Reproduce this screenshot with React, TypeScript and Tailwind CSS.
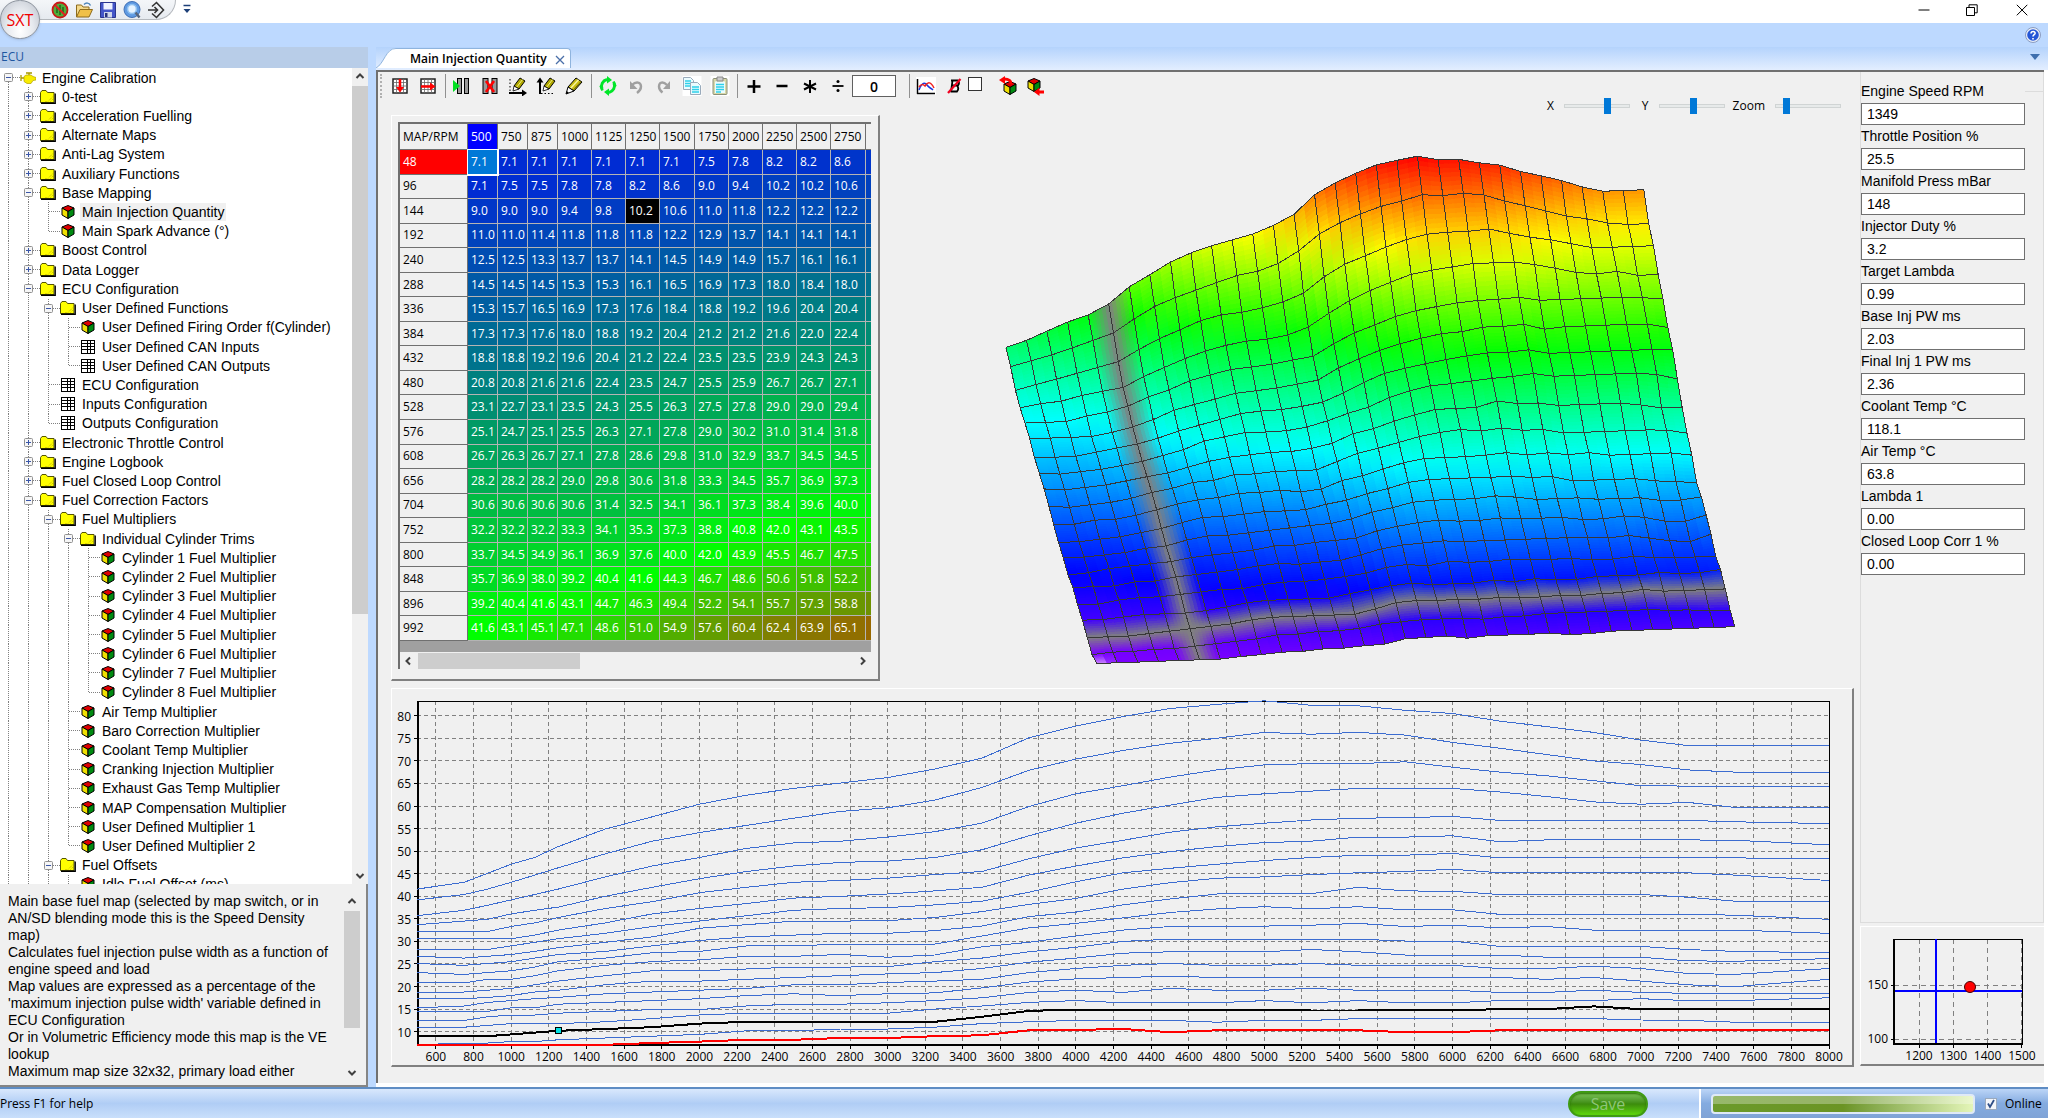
import type { ReactNode } from "react";
import clsx from "clsx";

const RPM = [
  500, 750, 875, 1000, 1125, 1250, 1500, 1750, 2000, 2250, 2500, 2750, 3000, 3250, 3500, 3750, 4000, 4250, 4500, 4750,
  5000, 5250, 5500, 5750, 6000, 6250, 6500, 6750, 7000, 7250, 7500, 8000,
];

const LOAD = [48, 96, 144, 192, 240, 288, 336, 384, 432, 480, 528, 576, 608, 656, 704, 752, 800, 848, 896, 992];

const MAP = [
  [7.1, 7.1, 7.1, 7.1, 7.1, 7.1, 7.1, 7.5, 7.8, 8.2, 8.2, 8.6, 8.6, 9.0, 9.2, 10.3, 10.4, 10.6, 9.9, 10.3, 10.3, 10.3, 10.3, 9.9, 9.9, 10.3, 10.3, 10.3, 10.3, 10.3, 10.3, 10.3],
  [7.1, 7.5, 7.5, 7.8, 7.8, 8.2, 8.6, 9.0, 9.4, 10.2, 10.2, 10.6, 10.6, 11.0, 11.8, 12.2, 12.5, 12.5, 12.5, 12.1, 12.5, 12.5, 12.9, 12.9, 12.9, 12.9, 12.9, 12.9, 12.6, 12.5, 12.1, 12.1],
  [9.0, 9.0, 9.0, 9.4, 9.8, 10.2, 10.6, 11.0, 11.8, 12.2, 12.2, 12.2, 12.2, 12.2, 13.3, 14.6, 14.9, 14.7, 14.9, 14.7, 14.9, 14.7, 14.7, 14.9, 14.7, 15.0, 15.0, 15.6, 15.0, 15.0, 15.0, 15.0],
  [11.0, 11.0, 11.4, 11.8, 11.8, 11.8, 12.2, 12.9, 13.7, 14.1, 14.1, 14.1, 14.1, 15.0, 15.7, 16.5, 16.9, 16.4, 16.4, 16.4, 16.9, 16.4, 16.9, 16.4, 16.4, 16.9, 16.9, 16.9, 17.3, 16.9, 16.9, 17.5],
  [12.5, 12.5, 13.3, 13.7, 13.7, 14.1, 14.5, 14.9, 14.9, 15.7, 16.1, 16.1, 16.4, 16.9, 17.5, 18.7, 19.2, 18.7, 19.6, 19.2, 19.2, 19.6, 19.2, 19.2, 19.2, 18.7, 18.7, 19.2, 18.7, 18.5, 18.5, 18.5],
  [14.5, 14.5, 14.5, 15.3, 15.3, 16.1, 16.5, 16.9, 17.3, 18.0, 18.4, 18.0, 18.4, 18.6, 19.7, 21.0, 21.7, 22.0, 22.3, 22.0, 22.0, 22.0, 22.0, 22.0, 22.0, 22.0, 21.6, 22.0, 21.2, 20.4, 20.0, 21.6],
  [15.3, 15.7, 16.5, 16.9, 17.3, 17.6, 18.4, 18.8, 19.2, 19.6, 20.4, 20.4, 20.9, 21.2, 21.6, 23.1, 24.0, 24.7, 25.1, 24.7, 24.7, 25.1, 24.7, 24.7, 24.7, 24.0, 24.0, 24.5, 24.0, 22.9, 22.7, 24.0],
  [17.3, 17.3, 17.6, 18.0, 18.8, 19.2, 20.4, 21.2, 21.2, 21.6, 22.0, 22.4, 22.8, 23.1, 24.0, 25.4, 26.3, 27.4, 27.7, 27.7, 27.7, 28.2, 27.7, 27.0, 27.0, 27.0, 26.5, 26.5, 26.5, 25.7, 25.6, 26.2],
  [18.8, 18.8, 19.2, 19.6, 20.4, 21.2, 22.4, 23.5, 23.5, 23.9, 24.3, 24.3, 24.4, 25.5, 26.3, 27.7, 28.7, 30.0, 30.5, 30.5, 30.5, 30.5, 30.5, 30.1, 30.1, 28.9, 28.9, 28.9, 28.9, 28.2, 27.8, 27.5],
  [20.8, 20.8, 21.6, 21.6, 22.4, 23.5, 24.7, 25.5, 25.9, 26.7, 26.7, 27.1, 26.5, 27.0, 28.8, 29.8, 31.2, 32.5, 33.3, 33.4, 33.4, 33.6, 34.0, 33.3, 33.6, 33.0, 33.3, 32.5, 32.5, 32.5, 32.5, 31.8],
  [23.1, 22.7, 23.1, 23.5, 24.3, 25.5, 26.3, 27.5, 27.8, 29.0, 29.0, 29.4, 29.4, 29.4, 31.2, 33.0, 34.0, 35.2, 36.4, 37.2, 37.7, 37.2, 37.7, 37.0, 37.0, 36.0, 36.0, 36.0, 36.0, 36.0, 35.8, 34.9],
  [25.1, 24.7, 25.1, 25.5, 26.3, 27.1, 27.8, 29.0, 30.2, 31.0, 31.4, 31.8, 31.8, 32.4, 33.4, 35.5, 36.5, 38.1, 39.4, 40.5, 40.6, 40.6, 42.0, 41.2, 41.1, 40.4, 40.4, 40.4, 40.4, 39.8, 38.9, 38.9],
  [26.7, 26.3, 26.7, 27.1, 27.8, 28.6, 29.8, 31.0, 32.9, 33.7, 34.5, 34.5, 34.6, 35.3, 36.6, 38.2, 39.5, 41.6, 43.0, 44.0, 44.3, 44.8, 45.2, 45.5, 46.0, 45.2, 45.2, 45.2, 45.2, 45.2, 44.7, 43.5],
  [28.2, 28.2, 28.2, 29.0, 29.8, 30.6, 31.8, 33.3, 34.5, 35.7, 36.9, 37.3, 37.5, 38.1, 38.9, 40.9, 43.2, 45.2, 46.2, 47.1, 47.9, 48.6, 49.1, 49.1, 49.5, 48.5, 48.5, 48.5, 48.5, 48.5, 48.5, 48.3],
  [30.6, 30.6, 30.6, 30.6, 31.4, 32.5, 34.1, 36.1, 37.3, 38.4, 39.6, 40.0, 40.5, 41.2, 42.0, 44.7, 46.7, 48.5, 49.9, 51.0, 51.9, 52.2, 53.1, 53.1, 53.4, 52.1, 52.5, 52.5, 52.5, 52.5, 52.4, 51.4],
  [32.2, 32.2, 32.2, 33.3, 34.1, 35.3, 37.3, 38.8, 40.8, 42.0, 43.1, 43.5, 44.0, 44.8, 45.5, 48.3, 50.7, 52.4, 54.2, 55.4, 56.2, 56.9, 57.3, 57.4, 57.7, 56.8, 56.8, 56.8, 56.8, 56.8, 56.5, 56.1],
  [33.7, 34.5, 34.9, 36.1, 36.9, 37.6, 40.0, 42.0, 43.9, 45.5, 46.7, 47.5, 47.8, 48.6, 50.3, 53.4, 56.2, 58.4, 60.2, 61.9, 62.7, 63.3, 63.9, 63.9, 63.9, 63.1, 62.1, 60.9, 60.4, 60.8, 59.7, 59.7],
  [35.7, 36.9, 38.0, 39.2, 40.4, 41.6, 44.3, 46.7, 48.6, 50.6, 51.8, 52.2, 53.1, 54.3, 56.2, 59.9, 62.7, 64.5, 66.4, 68.0, 69.1, 69.4, 69.4, 69.8, 68.6, 67.5, 66.7, 65.6, 64.5, 64.4, 64.4, 64.4],
  [39.2, 40.4, 41.6, 43.1, 44.7, 46.3, 49.4, 52.2, 54.1, 55.7, 57.3, 58.8, 59.6, 61.3, 64.1, 67.9, 70.4, 72.3, 73.9, 75.0, 76.3, 75.9, 76.3, 75.7, 74.1, 72.8, 71.4, 70.0, 69.2, 68.0, 67.5, 67.5],
  [41.6, 43.1, 45.1, 47.1, 48.6, 51.0, 54.9, 57.6, 60.4, 62.4, 63.9, 65.1, 66.3, 68.2, 70.6, 75.1, 77.7, 79.8, 81.6, 82.5, 83.3, 82.3, 82.2, 81.2, 80.5, 78.8, 77.6, 76.3, 74.6, 73.4, 73.4, 73.4],
];

const COLUMN_WIDTHS = [30, 30, 30, 34, 34, 34, 35, 34, 34, 34, 34, 35];

type TreeKind = "engine" | "folder" | "cube" | "grid";
type TreeItem = { label: string; depth: number; kind: TreeKind; open?: boolean; selected?: boolean };

const folder = (depth: number, label: string, open = false): TreeItem => ({ label, depth, kind: "folder", open });
const cube = (depth: number, label: string, selected = false): TreeItem => ({ label, depth, kind: "cube", selected });
const grid = (depth: number, label: string): TreeItem => ({ label, depth, kind: "grid" });

const TREE: TreeItem[] = [
  { label: "Engine Calibration", depth: 0, kind: "engine", open: true },
  folder(1, "0-test"),
  folder(1, "Acceleration Fuelling"),
  folder(1, "Alternate Maps"),
  folder(1, "Anti-Lag System"),
  folder(1, "Auxiliary Functions"),
  folder(1, "Base Mapping", true),
  cube(2, "Main Injection Quantity", true),
  cube(2, "Main Spark Advance (°)"),
  folder(1, "Boost Control"),
  folder(1, "Data Logger"),
  folder(1, "ECU Configuration", true),
  folder(2, "User Defined Functions", true),
  cube(3, "User Defined Firing Order f(Cylinder)"),
  grid(3, "User Defined CAN Inputs"),
  grid(3, "User Defined CAN Outputs"),
  grid(2, "ECU Configuration"),
  grid(2, "Inputs Configuration"),
  grid(2, "Outputs Configuration"),
  folder(1, "Electronic Throttle Control"),
  folder(1, "Engine Logbook"),
  folder(1, "Fuel Closed Loop Control"),
  folder(1, "Fuel Correction Factors", true),
  folder(2, "Fuel Multipliers", true),
  folder(3, "Individual Cylinder Trims", true),
  ...[1, 2, 3, 4, 5, 6, 7, 8].map((n) => cube(4, `Cylinder ${n} Fuel Multiplier`)),
  cube(3, "Air Temp Multiplier"),
  cube(3, "Baro Correction Multiplier"),
  cube(3, "Coolant Temp Multiplier"),
  cube(3, "Cranking Injection Multiplier"),
  cube(3, "Exhaust Gas Temp Multiplier"),
  cube(3, "MAP Compensation Multiplier"),
  cube(3, "User Defined Multiplier 1"),
  cube(3, "User Defined Multiplier 2"),
  folder(2, "Fuel Offsets", true),
  cube(3, "Idle Fuel Offset (ms)"),
];

const DESCRIPTION = [
  "Main base fuel map (selected by map switch, or in AN/SD blending mode this is the Speed Density map)",
  "Calculates fuel injection pulse width as a function of engine speed and load",
  "Map values are expressed as a percentage of the 'maximum injection pulse width' variable defined in ECU Configuration",
  "Or in Volumetric Efficiency mode this map is the VE lookup",
  "Maximum map size 32x32, primary load either",
];

const READINGS = [
  ["Engine Speed RPM", "1349"],
  ["Throttle Position %", "25.5"],
  ["Manifold Press mBar", "148"],
  ["Injector Duty %", "3.2"],
  ["Target Lambda", "0.99"],
  ["Base Inj PW ms", "2.03"],
  ["Final Inj 1 PW ms", "2.36"],
  ["Coolant Temp °C", "118.1"],
  ["Air Temp °C", "63.8"],
  ["Lambda 1", "0.00"],
  ["Closed Loop Corr 1 %", "0.00"],
];

/* ---------- small icons ---------- */

function CubeShape() {
  return (
    <g stroke="#000" strokeLinejoin="round">
      <path d="M8 1.5 14 4 8 7.5 2 4Z" fill="#e00000" />
      <path d="M2 4 8 7.5V14.5L2 11Z" fill="#f0e000" />
      <path d="M14 4 8 7.5V14.5L14 11Z" fill="#008a10" />
    </g>
  );
}

function TreeIcon({ kind }: { kind: TreeKind }) {
  if (kind === "engine")
    return (
      <svg viewBox="0 0 16 16" className="h-4 w-4 shrink-0">
        <path d="M1 5v6M1 8h3M6 3h6M9 3v2" stroke="#a89800" strokeWidth="1.3" />
        <path d="M4 6.5 6 5h5l2 1.5 3 1v2.5l-3 .5-2 3H7l-3-2Z" fill="#f8ec00" stroke="#b0a000" strokeWidth=".7" />
      </svg>
    );
  if (kind === "folder")
    return (
      <svg viewBox="0 0 16 16" className="h-4 w-4 shrink-0">
        <path d="M.5 3.5 2 1.5h4l1.5 2H14V13.5H.5Z" fill="#ffff00" stroke="#555500" />
        <path d="M1 14.2h14.2V4.5" fill="none" stroke="#000" strokeWidth="1.4" />
        <path d="M8 12.5l5-5M10.5 12.5l3-3M5.5 12.5h1" stroke="#b8a800" strokeDasharray="1 1" />
      </svg>
    );
  if (kind === "cube")
    return (
      <svg viewBox="1 0 14 16" className="h-4 w-4 shrink-0">
        <CubeShape />
      </svg>
    );
  return (
    <svg viewBox="0 0 16 16" className="h-4 w-4 shrink-0" shapeRendering="crispEdges">
      <rect x="1" y="1" width="14" height="14" fill="#fff" />
      <path d="M1 1.5h14M1 4.5h14M1 7.5h14M1 10.5h14M1 14.5h14M1.5 1v14M7.5 1v14M10.5 1v14M14.5 1v14" stroke="#000" />
    </svg>
  );
}

function Chevron({ d }: { d: string }) {
  return (
    <svg viewBox="0 0 16 16" className="h-4 w-4 shrink-0">
      <path d={d} fill="none" stroke="#404040" strokeWidth="2" />
    </svg>
  );
}

const UP = "M4.5 10 8 6.5 11.5 10";
const DOWN = "M4.5 6 8 9.5 11.5 6";
const LEFT = "M10 4.5 6.5 8 10 11.5";
const RIGHT = "M6 4.5 9.5 8 6 11.5";

function ToolIcon({ children }: { children: ReactNode }) {
  return (
    <svg viewBox="0 0 20 20" className="h-5 w-5">
      {children}
    </svg>
  );
}

const Pencil = () => (
  <>
    <path d="M6 10 12 2 17 5 11 13Z" fill="#b0a800" stroke="#000" />
    <path d="M8.5 11.5 14.5 3.5" stroke="#f4f080" />
    <path d="M6 10 5 15 11 13Z" fill="#fff" stroke="#000" strokeWidth=".8" />
  </>
);

const TableGrid = () => (
  <>
    <rect x="3" y="3" width="14" height="14" fill="#fff" stroke="#222" strokeWidth="1.5" />
    <path d="M3 6.5h14M3 10h14M3 13.5h14M6.5 3v14M10 3v14M13.5 3v14" stroke="#666" strokeWidth=".8" />
  </>
);

const TOOLS: Record<string, ReactNode> = {
  "Interpolate vertical": (
    <>
      <TableGrid />
      <path d="M10 3v11" stroke="#f00" strokeWidth="2.5" />
      <path d="M6 11h8L10 16.5Z" fill="#f00" />
    </>
  ),
  "Interpolate horizontal": (
    <>
      <TableGrid />
      <path d="M3 10.5h10" stroke="#f00" strokeWidth="2.5" />
      <path d="M12 6.5v8L17.5 10.5Z" fill="#f00" />
    </>
  ),
  "Insert column": (
    <>
      <rect x="5.5" y="2.500" width="4" height="15" fill="#999" stroke="#000" />
      <rect x="12.5" y="2.500" width="4" height="15" fill="#999" stroke="#000" />
      <path d="M1 4v12l7-6Z" fill="#00e020" />
    </>
  ),
  "Delete column": (
    <>
      <rect x="3" y="2.500" width="5" height="15" fill="#999" stroke="#000" />
      <rect x="12" y="2.500" width="5" height="15" fill="#999" stroke="#000" />
      <path d="M6 5 14 16M14 5 6 16" stroke="#f00" strokeWidth="2.6" />
    </>
  ),
  "Edit X axis": (
    <>
      <Pencil />
      <path d="M2 3v13" stroke="#000" strokeDasharray="1.5 2" />
      <path d="M1 17h15" stroke="#000" strokeWidth="2" />
      <path d="M14 13.5v7L19 17Z" />
    </>
  ),
  "Edit Y axis": (
    <>
      <g transform="translate(2 0)">
        <Pencil />
      </g>
      <path d="M4 18V5" stroke="#000" strokeWidth="2" />
      <path d="M.5 6.5h7L4 1.5Z" />
      <path d="M5 17.5h14" stroke="#000" strokeDasharray="1.5 2" />
    </>
  ),
  "Edit value": (
    <>
      <path d="M4 11 12 2 18 6 10 15Z" fill="#c8bc10" stroke="#000" />
      <path d="M6.5 12.5 14.5 3.8" stroke="#f8f4a0" strokeWidth="1.5" />
      <path d="M9 14.5 17 5.5" stroke="#6b6400" />
      <path d="M4 11 2 18 10 15Z" fill="#fff" stroke="#000" />
      <path d="M2 18l.8-3 2 1.8Z" />
    </>
  ),
  Refresh: (
    <>
      <path d="M4 13a7 7 0 0 1 5-9.5M16 7a7 7 0 0 1-5 9.5" fill="none" stroke="#00e628" strokeWidth="3" />
      <path d="M9 0v7.5l5-3.5ZM11 20v-7.5l-5 3.5Z" fill="#00e628" />
      <path d="M15.5 5.5l2 5M4.500 14.500l-2-5" stroke="#00e628" strokeWidth="2.5" />
    </>
  ),
  Undo: (
    <>
      <path d="M6 9c4-4 9-3 9 1.5 0 3-2 5-4 6.5" fill="none" stroke="#a0a0a0" strokeWidth="2.4" />
      <path d="M4 5v8h7.500Z" fill="#a0a0a0" />
    </>
  ),
  Redo: (
    <>
      <path d="M13 9c-4-4-8-3-8 1.5 0 3 1.500 4.500 3.500 6" fill="none" stroke="#a0a0a0" strokeWidth="2.4" />
      <path d="M16 5v8H9Z" fill="#a0a0a0" />
    </>
  ),
  Copy: (
    <>
      <path d="M.5 0H19.5V20H.5Z" fill="#fff" />
      <path d="M1.5 1.5h7l3 3v9h-10Z" fill="#eafcff" stroke="#9ab" />
      <path d="M3 5h6M3 7.5h6M3 10h6" stroke="#2ed0ea" strokeWidth="1.3" />
      <path d="M8.5 6.5h7l3 3v9h-10Z" fill="#eafcff" stroke="#9ab" />
      <path d="M10 11h7M10 13.5h7M10 16h7" stroke="#2ed0ea" strokeWidth="1.3" />
    </>
  ),
  Paste: (
    <>
      <path d="M.5 0H19.5V20H.5Z" fill="#fff" />
      <rect x="3" y="2.5" width="14" height="16" rx="1" fill="#d8d8a8" stroke="#8a8f78" />
      <rect x="5" y="5.5" width="10" height="11.5" fill="#eafcff" />
      <path d="M6 8.5h8M6 11h8M6 13.5h8M6 16h5" stroke="#2ed0ea" strokeWidth="1.3" />
      <path d="M7 1h6v4H7Z" fill="#ccc" stroke="#888" />
    </>
  ),
  Add: <path d="M10 4v13M3.5 10.5h13" stroke="#000" strokeWidth="2.5" />,
  Subtract: <path d="M4.500 10h11" stroke="#000" strokeWidth="2.5" />,
  Multiply: <path d="M10 4v13M4 7.5l12 6M16 7.5l-12 6" stroke="#000" strokeWidth="2" />,
  Divide: (
    <>
      <path d="M4.5 10h11" stroke="#000" strokeWidth="1.8" />
      <circle cx="10" cy="5.5" r="1.5" />
      <circle cx="10" cy="14.5" r="1.5" />
    </>
  ),
  Graph: (
    <>
      <path d="M0 1H20V19H0Z" fill="#fff" />
      <path d="M1.5 3v14.5H19" fill="none" stroke="#000" strokeWidth="1.5" />
      <path d="M3 14c3-8 6-8 8-5s4 3 6 5" fill="none" stroke="#1838e0" strokeWidth="1.5" />
      <path d="M3 11c2-3 4-3 6-1 3-5 6-4 9 2" fill="none" stroke="#f02020" strokeWidth="1.5" />
    </>
  ),
  "Follow off": (
    <>
      <path d="M7 4.5h7q2 2.500 0 5H8M13 9.5q2.500 3 0 6H6.500M8.500 4.5 7 16" fill="none" stroke="#000" strokeWidth="1.8" />
      <path d="M4 17 16.500 3" stroke="#f00020" strokeWidth="2.2" />
    </>
  ),
  "Send map": (
    <>
      <g transform="translate(4 4)">
        <CubeShape />
      </g>
      <path d="M13 8c0-4-2-5-7-5" fill="none" stroke="#f00" strokeWidth="3" />
      <path d="M7 0v8L1 4Z" fill="#f00" />
    </>
  ),
  "Receive map": (
    <>
      <g transform="translate(0 1)">
        <CubeShape />
      </g>
      <path d="M12 16h6" stroke="#f00" strokeWidth="3" />
      <path d="M13.5 11.5v8.500L8 16Z" fill="#f00" />
    </>
  ),
};

function Tool({ name }: { name: string }) {
  return (
    <button aria-label={name} className="flex h-7 w-7 shrink-0 items-center justify-center">
      <ToolIcon>{TOOLS[name]}</ToolIcon>
    </button>
  );
}

const Separator = () => <span className="mr-[2px] ml-[3px] h-6 w-px shrink-0 bg-[#909090]" />;

/* ---------- title bar ---------- */

function QuickButton({ name, children }: { name: string; children: ReactNode }) {
  return (
    <button aria-label={name} className="flex h-[18px] w-6 items-center justify-center">
      <svg viewBox="0 0 18 18" className="h-[18px] w-[18px]">
        {children}
      </svg>
    </button>
  );
}

function TitleBar() {
  return (
    <header className="relative h-[47px] shrink-0 bg-[#bdd9ff]">
      <div className="flex h-[23px] items-start justify-between bg-white">
        <div className="flex items-start">
          <div className="flex h-5 w-[176px] items-center rounded-br-full border-r border-b border-[#b4b8bd] bg-linear-to-b from-[#f4f6f9] to-[#e6eaef] pl-12">
            <QuickButton name="Disconnect">
              <circle cx="9" cy="9" r="7.5" fill="#4fae3c" stroke="#c81818" strokeWidth="1.8" />
              <path d="M6 6v6M9 4v10M12 6v6" stroke="#1c6418" strokeWidth="1.4" />
              <path d="m4 4 10 10" stroke="#e02020" strokeWidth="1.8" />
            </QuickButton>
            <QuickButton name="Open">
              <path d="M1.500 16V4h5l1.500 2h6v3" fill="#f4d98a" stroke="#8d6b1c" />
              <path d="M1.500 16 5 8.500h12.500L14 16Z" fill="#f0c048" stroke="#8d6b1c" />
              <path d="M9 3.500c2-2 5-2 6.500 1" fill="none" stroke="#4b83b8" strokeWidth="1.5" />
            </QuickButton>
            <QuickButton name="Save">
              <path d="M1.500 1.500h15v15h-15Z" fill="#4355c8" stroke="#2a3590" />
              <path d="M4.500 2h9v6.500h-9Z" fill="#eef2ff" />
              <path d="M5 11h8v5.500H5Z" fill="#cfd6ea" />
              <path d="M6 12h2.500v4H6Z" fill="#26307c" />
            </QuickButton>
            <QuickButton name="Search">
              <circle cx="9" cy="8.500" r="8" fill="#5f9ae2" stroke="#3f6fb5" />
              <circle cx="9" cy="8" r="4.500" fill="#e6f3ff" stroke="#8fc0f0" strokeWidth="1.6" />
              <path d="m12.500 11.500 4 5" stroke="#56657c" strokeWidth="2.4" />
            </QuickButton>
            <QuickButton name="Go online">
              <path d="M5 5.500 9.500 1.500 16.500 9l-7 7.500L5 12.500" fill="none" stroke="#333" strokeWidth="1.6" />
              <path d="M1 9h9M7.500 6l3 3-3 3" fill="none" stroke="#333" strokeWidth="1.6" />
            </QuickButton>
          </div>
          <svg viewBox="0 0 10 10" className="mt-1 ml-[6px] h-[10px] w-[10px]">
            <path d="M1.500 1.500h7" stroke="#1d3f78" strokeWidth="1.5" />
            <path d="M1.500 5h7L5 9Z" fill="#1d3f78" />
          </svg>
        </div>
        <div className="flex h-5 items-center">
          <button aria-label="Minimize" className="flex w-12 justify-center">
            <svg viewBox="0 0 12 12" className="h-3 w-3">
              <path d="M.5 6h11" stroke="#000" />
            </svg>
          </button>
          <button aria-label="Restore" className="flex w-12 justify-center">
            <svg viewBox="0 0 12 12" className="h-3 w-3">
              <path d="M.5 3.500h8v8h-8ZM3 3V.8h8.200v8H9" fill="none" stroke="#000" />
            </svg>
          </button>
          <button aria-label="Close" className="flex w-[52px] justify-center">
            <svg viewBox="0 0 12 12" className="h-3 w-3">
              <path d="m.8.8 10.500 10.500M11.300.8.8 11.300" stroke="#000" />
            </svg>
          </button>
        </div>
      </div>
      <div className="flex h-6 items-center justify-end pr-[7px]">
        <button aria-label="Help" className="h-4 w-4">
          <svg viewBox="0 0 16 16" className="h-4 w-4">
            <circle cx="8" cy="8" r="7.500" fill="#e8eefa" stroke="#8a9cc0" />
            <circle cx="8" cy="8" r="5.800" fill="#2456d6" />
            <path d="M6 6.500c0-3 4.500-2.500 4 0-.3 1.200-2 1.200-2 3M8 11v1.500" fill="none" stroke="#fff" strokeWidth="1.6" />
          </svg>
        </button>
      </div>
      <button className="absolute top-0 left-0 flex h-[39px] w-10 items-center justify-center rounded-full border border-[#8d949e] bg-radial-[at_50%_80%] from-white via-[#e6e9ee] to-[#b9bfc9] font-['Open_Sans',sans-serif] text-base text-[#f00000] shadow">
        SXT
      </button>
    </header>
  );
}

/* ---------- left side ---------- */

// A guide runs on when another item of the same depth follows before the branch closes.
function branchContinues(index: number, depth: number) {
  for (let i = index + 1; i < TREE.length; i++) {
    if (TREE[i].depth < depth) return false;
    if (TREE[i].depth === depth) return true;
  }
  return true;
}

function Guides({ item, index }: { item: TreeItem; index: number }) {
  const dots = { stroke: "#808080", strokeDasharray: "1 1" };
  return (
    <>
      {Array.from({ length: item.depth }, (_, d) => (
        <svg key={d} className="h-full w-5 shrink-0">
          {branchContinues(index, d) && <line x1="8.5" x2="8.5" y1="0" y2="100%" {...dots} />}
        </svg>
      ))}
      <svg className="h-full w-5 shrink-0">
        <line x1="8.5" x2="8.5" y1={index === 0 ? 10 : 0} y2={branchContinues(index, item.depth) ? "100%" : "10"} {...dots} />
        <line x1="9" x2="20" y1="9.5" y2="9.5" {...dots} />
        {item.open !== undefined && (
          <>
            <rect x="4.5" y="5.5" width="8" height="8" rx="1" fill="#f6f6f6" stroke="#919191" />
            <path d={item.open ? "M6 9.5h5" : "M6 9.5h5M8.5 7v5"} stroke="#3a56a8" />
          </>
        )}
      </svg>
    </>
  );
}

function Tree() {
  return (
    <div className="flex min-h-0 flex-1 overflow-hidden bg-white">
      <div className="min-w-0 flex-1">
        <ul className="grid h-[826px] auto-rows-fr font-['Liberation_Sans',Arial,sans-serif] text-sm leading-[18px]">
          {TREE.map((item, i) => (
            <li key={i} className="flex min-h-0 items-center whitespace-nowrap">
              <Guides item={item} index={i} />
              <TreeIcon kind={item.kind} />
              <span className={clsx("ml-1 px-[2px]", item.selected && "bg-[#f0f0f0]")}>{item.label}</span>
            </li>
          ))}
        </ul>
      </div>
      <div className="flex w-4 flex-col bg-[#f0f0f0]">
        <Chevron d={UP} />
        <div className="mt-[2px] h-[528px] bg-[#cdcdcd]" />
        <div className="flex-1" />
        <Chevron d={DOWN} />
      </div>
    </div>
  );
}

function Sidebar() {
  return (
    <aside className="flex w-[368px] shrink-0 flex-col">
      <h2 className="h-[21px] bg-[#b8cde8] pl-[1px] font-['Open_Sans',sans-serif] text-xs leading-5 text-[#1e56a0]">ECU</h2>
      <Tree />
      <div className="flex h-[203px] shrink-0 border-r-2 border-b-2 border-[#858585] bg-[#f0f0f0] pt-[9px] pb-1">
        <div className="min-w-0 flex-1 overflow-hidden pl-2 font-['Liberation_Sans',Arial,sans-serif] text-sm leading-[17px]">
          {DESCRIPTION.map((line) => (
            <p key={line} className="max-w-[332px]">
              {line}
            </p>
          ))}
        </div>
        <div className="mr-[6px] flex w-4 flex-col">
          <Chevron d={UP} />
          <div className="mt-[2px] h-[117px] bg-[#cdcdcd]" />
          <div className="flex-1" />
          <Chevron d={DOWN} />
        </div>
      </div>
    </aside>
  );
}

/* ---------- fuel table ---------- */

// Blue through green up to mid scale, then green through red.
function cellColor(v: number) {
  const mid = 41.6;
  if (v <= mid) {
    const g = Math.round((v / mid) * 255);
    return `rgb(0 ${g} ${255 - g})`;
  }
  const r = Math.round(((v - mid) / mid) * 255);
  return `rgb(${r} ${255 - r} 0)`;
}

function FuelTable() {
  const columns = RPM.slice(0, COLUMN_WIDTHS.length);
  return (
    <div className="w-[489px] shrink-0 border-t border-r-2 border-b-2 border-l border-t-white border-r-[#808080] border-b-[#808080] border-l-white p-[6px] pb-[7px]">
      <div className="w-[473px] border-t-2 border-l-2 border-[#707070] bg-[#a0a0a0]">
        <table className="h-[517px] w-full table-fixed border-separate border-spacing-0 bg-[#f0f0f0] font-['Open_Sans',sans-serif] text-xs leading-4">
          <colgroup>
            <col className="w-[68px]" />
            {COLUMN_WIDTHS.map((w, i) => (
              <col key={i} style={{ width: w }} />
            ))}
            <col />
          </colgroup>
          <thead>
            <tr>
              <th className="h-[26px] border-r border-b border-[#707070] p-0 pl-[3px] text-left font-normal whitespace-nowrap">
                MAP/RPM
              </th>
              {columns.map((rpm, c) => (
                <th
                  key={rpm}
                  className={clsx(
                    "border-r border-b border-[#707070] p-0 pl-[3px] text-left font-normal",
                    c === 0 && "bg-[#0000ff] text-white",
                  )}
                >
                  {rpm}
                </th>
              ))}
              <td className="border-b border-[#707070] p-0" />
            </tr>
          </thead>
          <tbody>
            {LOAD.map((load, r) => (
              <tr key={load}>
                <th
                  className={clsx(
                    "border-r border-b border-[#707070] p-0 pl-[3px] text-left font-normal",
                    r === 0 && "bg-[#ff0000] text-white",
                  )}
                >
                  {load}
                </th>
                {columns.map((rpm, c) => {
                  const value = MAP[r][c];
                  const active = r === 0 && c === 0;
                  const traced = r === 2 && c === 5;
                  return (
                    <td
                      key={rpm}
                      className={clsx(
                        "border-r border-b p-0 pl-[3px] text-white",
                        active ? "border-white outline outline-white" : "border-[#b4b4b4]",
                      )}
                      style={{ backgroundColor: active ? "#0078d7" : traced ? "#000" : cellColor(value) }}
                    >
                      {value.toFixed(1)}
                    </td>
                  );
                })}
                <td className="border-b border-[#b4b4b4] p-0" style={{ backgroundColor: cellColor(MAP[r][columns.length]) }} />
              </tr>
            ))}
          </tbody>
        </table>
        <div className="h-[11px]" />
        <div className="flex h-[17px] items-center bg-[#f0f0f0]">
          <Chevron d={LEFT} />
          <div className="ml-[2px] h-4 w-[162px] bg-[#cdcdcd]" />
          <div className="flex-1" />
          <Chevron d={RIGHT} />
        </div>
      </div>
    </div>
  );
}

/* ---------- 3D surface ---------- */

type Rgb = [number, number, number];

const ROWS_BACK_TO_FRONT = [...MAP].reverse();
const TRACE_COL = 5;
const TRACE_ROW = 17;

function project(i: number, j: number, v: number) {
  return [125.4 + 20.52 * i + 4.775 * j, 407.1 - 0.75 * i + 8.93 * j - 4.214 * v];
}

function hueColor(v: number): Rgb {
  const h = Math.max(0, (83.3 - v) * 3.53) / 60;
  const x = 1 - Math.abs((h % 2) - 1);
  const rgb = h < 1 ? [1, x, 0] : h < 2 ? [x, 1, 0] : h < 3 ? [0, 1, x] : h < 4 ? [0, x, 1] : [x, 0, 1];
  return rgb.map((c) => c * 255) as Rgb;
}

function vertexColor(i: number, j: number): Rgb {
  if (i === 0 && j === 19) return [225, 170, 255];
  if (i === TRACE_COL || j === TRACE_ROW) return [128, 128, 128];
  return hueColor(ROWS_BACK_TO_FRONT[j][i]);
}

const mix = (a: number, b: number, t: number) => a + (b - a) * t;

function buildFacets() {
  const facets: { points: string; fill: string }[] = [];
  const z = ROWS_BACK_TO_FRONT;
  const nv = 8;
  for (let j = 0; j < 19; j++) {
    for (let i = 0; i < 31; i++) {
      // finer strips beside the trace column, where the colour changes sideways
      const nu = i === TRACE_COL || i === TRACE_COL - 1 ? 6 : 2;
      const corners = [
        [project(i, j, z[j][i]), project(i + 1, j, z[j][i + 1])],
        [project(i, j + 1, z[j + 1][i]), project(i + 1, j + 1, z[j + 1][i + 1])],
      ];
      const colors = [
        [vertexColor(i, j), vertexColor(i + 1, j)],
        [vertexColor(i, j + 1), vertexColor(i + 1, j + 1)],
      ];
      const at = (cell: number[][][], u: number, v: number, k: number) =>
        mix(mix(cell[0][0][k], cell[0][1][k], u), mix(cell[1][0][k], cell[1][1][k], u), v);
      for (let a = 0; a < nu; a++) {
        for (let b = 0; b < nv; b++) {
          const pts = [
            [a, b],
            [a + 1, b],
            [a + 1, b + 1],
            [a, b + 1],
          ].map(([p, q]) => [0, 1].map((k) => at(corners, p / nu, q / nv, k).toFixed(1)).join(","));
          const c = [0, 1, 2].map((k) => Math.round(at(colors, (a + 0.5) / nu, (b + 0.5) / nv, k)));
          facets.push({ points: pts.join(" "), fill: `rgb(${c.join(" ")})` });
        }
      }
    }
  }
  return facets;
}

const FACETS = buildFacets();

const line = (pts: number[][]) => pts.map((p) => p.map((n) => n.toFixed(1)).join(",")).join(" ");

const MESH = [
  ...ROWS_BACK_TO_FRONT.map((row, j) => line(row.map((v, i) => project(i, j, v)))),
  ...RPM.map((_, i) => line(ROWS_BACK_TO_FRONT.map((row, j) => project(i, j, row[i])))),
];

function Surface() {
  return (
    <svg viewBox="0 0 972 564" className="min-w-0 flex-1" shapeRendering="crispEdges" role="img" aria-label="Fuel map surface">
      {FACETS.map((f, n) => (
        <polygon key={n} points={f.points} fill={f.fill} stroke={f.fill} strokeWidth="0.6" />
      ))}
      {MESH.map((points, n) => (
        <polyline key={n} points={points} fill="none" stroke="#383838" />
      ))}
    </svg>
  );
}

/* ---------- line chart ---------- */

const chartX = (rpm: number) => 25 + (rpm - 500) * 0.18827;
const chartY = (v: number) => 342.7 - (v - 10) * 4.514;

function LineChart() {
  const xTicks = Array.from({ length: 38 }, (_, k) => 600 + k * 200);
  const yTicks = Array.from({ length: 15 }, (_, k) => 10 + k * 5);
  const curve = (row: number[]) => line(row.map((v, i) => [chartX(RPM[i]), chartY(v)]));
  return (
    <div className="mr-[1px] border-t border-r-2 border-b-2 border-l border-t-white border-r-[#808080] border-b-[#808080] border-l-white">
      <svg viewBox="0 0 1460 376" className="block w-full font-['Open_Sans',sans-serif] text-xs" shapeRendering="crispEdges">
        {xTicks.map((t) => (
          <g key={t}>
            <line x1={chartX(t)} x2={chartX(t)} y1="12" y2="356" stroke="#808080" strokeDasharray="4 3" />
            <line x1={chartX(t)} x2={chartX(t)} y1="356" y2="360" stroke="#000" />
            <text x={chartX(t)} y="372" textAnchor="middle">
              {t}
            </text>
          </g>
        ))}
        {yTicks.map((t) => (
          <g key={t}>
            <line x1="25" x2="1437" y1={chartY(t)} y2={chartY(t)} stroke="#808080" strokeDasharray="4 3" />
            <line x1="22" x2="25" y1={chartY(t)} y2={chartY(t)} stroke="#000" />
            <text x="19" y={chartY(t) + 5} textAnchor="end">
              {t}
            </text>
          </g>
        ))}
        <rect x="25" y="12" width="1412" height="344" fill="none" stroke="#000" />
        <path d="M25.5 12V356H1437" fill="none" stroke="#000" strokeWidth="2" />
        {MAP.map((row, r) => (r === 0 || r === 2 ? null : <polyline key={r} points={curve(row)} fill="none" stroke="#3c6cd0" />))}
        <polyline points={curve(MAP[0])} fill="none" stroke="#f00" strokeWidth="2" />
        <polyline points={curve(MAP[2])} fill="none" stroke="#000" strokeWidth="2" />
        <rect x={chartX(1250) - 3} y={chartY(10.2) - 3} width="6" height="6" fill="#00e0e0" stroke="#000" />
      </svg>
    </div>
  );
}

/* ---------- right side ---------- */

function TraceChart() {
  const xTicks = [1200, 1300, 1400, 1500];
  const px = (v: number) => 57 + (v - 1200) * 0.343;
  const yTicks = [
    [150, 58],
    [100, 112],
  ];
  return (
    <div className="border-t border-b-2 border-l border-t-white border-b-[#808080] border-l-white">
      <svg viewBox="-1 0 183 137" className="block w-full font-['Open_Sans',sans-serif] text-xs" shapeRendering="crispEdges">
        {xTicks.map((t) => (
          <g key={t}>
            <line x1={px(t)} x2={px(t)} y1="12" y2="117" stroke="#808080" strokeDasharray="5 4" />
            <line x1={px(t)} x2={px(t)} y1="117" y2="121" stroke="#000" />
            <text x={px(t)} y="133" textAnchor="middle">
              {t}
            </text>
          </g>
        ))}
        {yTicks.map(([t, y]) => (
          <g key={t}>
            <line x1="32" x2="160" y1={y} y2={y} stroke="#808080" strokeDasharray="5 4" />
            <line x1="29" x2="32" y1={y} y2={y} stroke="#000" />
            <text x="26" y={y + 4} textAnchor="end">
              {t}
            </text>
          </g>
        ))}
        <rect x="32" y="12" width="128" height="105" fill="none" stroke="#000" />
        <path d="M32 12V117H160" fill="none" stroke="#000" strokeWidth="2" />
        <path d="M74 12V116M33 64H160" stroke="#0000ff" strokeWidth="2" />
        <circle cx="108" cy="60" r="5.5" fill="#f00" stroke="#400" shapeRendering="auto" />
      </svg>
    </div>
  );
}

function Readings() {
  return (
    <div className="flex w-[184px] shrink-0 flex-col">
      <div className="flex-1 border-r border-b border-l border-[#dcdcdc] pt-2 font-['Liberation_Sans',Arial,sans-serif] text-sm">
        {READINGS.map(([label, value], i) => (
          <div key={label} className="flex h-[45px] flex-col">
            <div className="flex items-center justify-between">
              <label htmlFor={`reading-${i}`} className="leading-[23px]">
                {label}
              </label>
              {i === 0 && <span className="h-px w-[18px] bg-[#dcdcdc]" />}
            </div>
            <input
              id={`reading-${i}`}
              readOnly
              value={value}
              className="h-[22px] w-[164px] border border-[#707070] bg-white px-[5px] leading-5 outline-none"
            />
          </div>
        ))}
      </div>
      <div className="mt-[3px]">
        <TraceChart />
      </div>
    </div>
  );
}

/* ---------- editor ---------- */

function Slider({ label, value }: { label: string; value: number }) {
  return (
    <label className="flex items-center">
      {label}
      <input
        type="range"
        defaultValue={value}
        className="ml-[10px] h-4 w-[66px] appearance-none bg-transparent [&::-webkit-slider-runnable-track]:h-1 [&::-webkit-slider-runnable-track]:border [&::-webkit-slider-runnable-track]:border-[#d0d4d4] [&::-webkit-slider-runnable-track]:bg-[#e7eaea] [&::-webkit-slider-thumb]:-mt-[7px] [&::-webkit-slider-thumb]:h-4 [&::-webkit-slider-thumb]:w-[7px] [&::-webkit-slider-thumb]:appearance-none [&::-webkit-slider-thumb]:bg-[#0078d7]"
      />
    </label>
  );
}

function Toolbar() {
  return (
    <div className="flex h-[43px] shrink-0 items-start justify-between">
      <div className="flex h-7 items-center">
        <span className="mr-1 ml-[2px] h-6 border-l-2 border-dotted border-[#b0b0b0]" />
        <Tool name="Interpolate vertical" />
        <Tool name="Interpolate horizontal" />
        <Separator />
        <Tool name="Insert column" />
        <Tool name="Delete column" />
        <Tool name="Edit X axis" />
        <Tool name="Edit Y axis" />
        <Tool name="Edit value" />
        <Separator />
        <Tool name="Refresh" />
        <Tool name="Undo" />
        <Tool name="Redo" />
        <Tool name="Copy" />
        <Tool name="Paste" />
        <Separator />
        <Tool name="Add" />
        <Tool name="Subtract" />
        <Tool name="Multiply" />
        <Tool name="Divide" />
        <input
          aria-label="Amount"
          defaultValue="0"
          className="mr-[10px] h-[22px] w-11 border border-[#606060] bg-white text-center font-['Open_Sans',sans-serif] text-sm font-semibold outline-none"
        />
        <Separator />
        <Tool name="Graph" />
        <Tool name="Follow off" />
        <input type="checkbox" aria-label="Follow" className="mr-3 mb-1 h-[14px] w-[14px] appearance-none border border-[#333] bg-white" />
        <Tool name="Send map" />
        <Tool name="Receive map" />
      </div>
      <div className="mr-[14px] flex gap-3 self-end font-['Open_Sans',sans-serif] text-xs leading-[18px]">
        <Slider label="X" value={68} />
        <Slider label="Y" value={54} />
        <span className="-ml-1">
          <Slider label="Zoom" value={12} />
        </span>
      </div>
    </div>
  );
}

function Editor() {
  return (
    <main className="flex min-w-0 flex-1 flex-col">
      <div className="flex h-[23px] items-end justify-between bg-linear-to-b from-[#b4d3fc] to-[#e3eeff] pr-2 pb-[2px]">
        <div className="flex items-end">
          <svg viewBox="0 0 20 20" className="h-5 w-5">
            <path d="M0 20C8 16 10 0 20 0V20Z" fill="#fff" />
            <path d="M0 20C8 16 10 0 20 .5" fill="none" stroke="#8fb4de" />
          </svg>
          <div className="flex h-5 items-center gap-2 rounded-tr border-t border-r border-[#8fb4de] bg-white pr-[5px] pl-[14px]">
            <span className="font-['Open_Sans',sans-serif] text-xs leading-4 font-semibold">Main Injection Quantity</span>
            <button aria-label="Close tab" className="mt-[2px] h-[10px] w-[10px]">
              <svg viewBox="0 0 10 10" className="h-[10px] w-[10px]">
                <path d="m1 1 8 8M9 1 1 9" stroke="#4a6fa8" strokeWidth="1.3" />
              </svg>
            </button>
          </div>
        </div>
        <svg viewBox="0 0 10 6" className="mb-2 h-[6px] w-[10px]">
          <path d="M0 0h10L5 6Z" fill="#3f6fae" />
        </svg>
      </div>
      <div className="flex min-h-0 flex-1 flex-col bg-white pr-1 pb-1">
        <div className="flex min-h-0 flex-1 border-t-2 border-l-2 border-[#707070] bg-[#f0f0f0] pb-[17px]">
          <div className="flex min-w-0 flex-1 flex-col pr-[5px]">
            <Toolbar />
            <div className="flex pl-[13px]">
              <FuelTable />
              <Surface />
            </div>
            <div className="mt-[7px] pl-[13px]">
              <LineChart />
            </div>
          </div>
          <Readings />
        </div>
      </div>
    </main>
  );
}

function StatusBar() {
  return (
    <footer className="flex h-[31px] shrink-0 border-t-2 border-[#5f8dc4] bg-linear-to-b from-[#d9e8fc] via-[#b0cdf5] to-[#c9dffb] font-['Open_Sans',sans-serif] text-xs">
      <p className="flex-1 self-center">Press F1 for help</p>
      <div className="flex w-[131px] items-center">
        <button className="h-[26px] w-20 rounded-full border-2 border-[#3f9a12] bg-linear-to-b from-[#7cc356] via-[#3c8c0c] to-[#5fd80c] text-base leading-5 text-[#8fc67a] shadow-[inset_0_1px_2px_#2c7005]">
          Save
        </button>
      </div>
      <div className="flex w-[349px] items-center border-l-2 border-white bg-linear-to-b from-[#bcd5f7] via-[#84abe0] to-[#7fa3d6] pl-[10px]">
        <div
          role="progressbar"
          aria-label="Link quality"
          className="h-5 w-[264px] rounded-sm border-2 border-[#dfe9f7] bg-linear-to-r from-[#6b9a2b] via-[#6b9424] via-50% to-[#e4f5b8]"
        >
          <div className="h-2 bg-white/30" />
        </div>
        <label className="ml-[10px] flex items-center gap-2">
          <span className="grid">
            <input type="checkbox" defaultChecked className="col-start-1 row-start-1 h-3 w-3 appearance-none border border-[#9aa9bd] bg-[#f3f6fa]" />
            <svg viewBox="0 0 12 12" className="pointer-events-none col-start-1 row-start-1 h-3 w-3">
              <path d="M3 5.500 5 9l4-7" fill="none" stroke="#2f4f88" strokeWidth="1.8" />
            </svg>
          </span>
          Online
        </label>
      </div>
    </footer>
  );
}

export default function App() {
  return (
    <div className="flex h-screen flex-col overflow-hidden bg-[#bdd9ff] text-black">
      <TitleBar />
      <div className="flex min-h-0 flex-1 gap-2">
        <Sidebar />
        <Editor />
      </div>
      <StatusBar />
    </div>
  );
}
